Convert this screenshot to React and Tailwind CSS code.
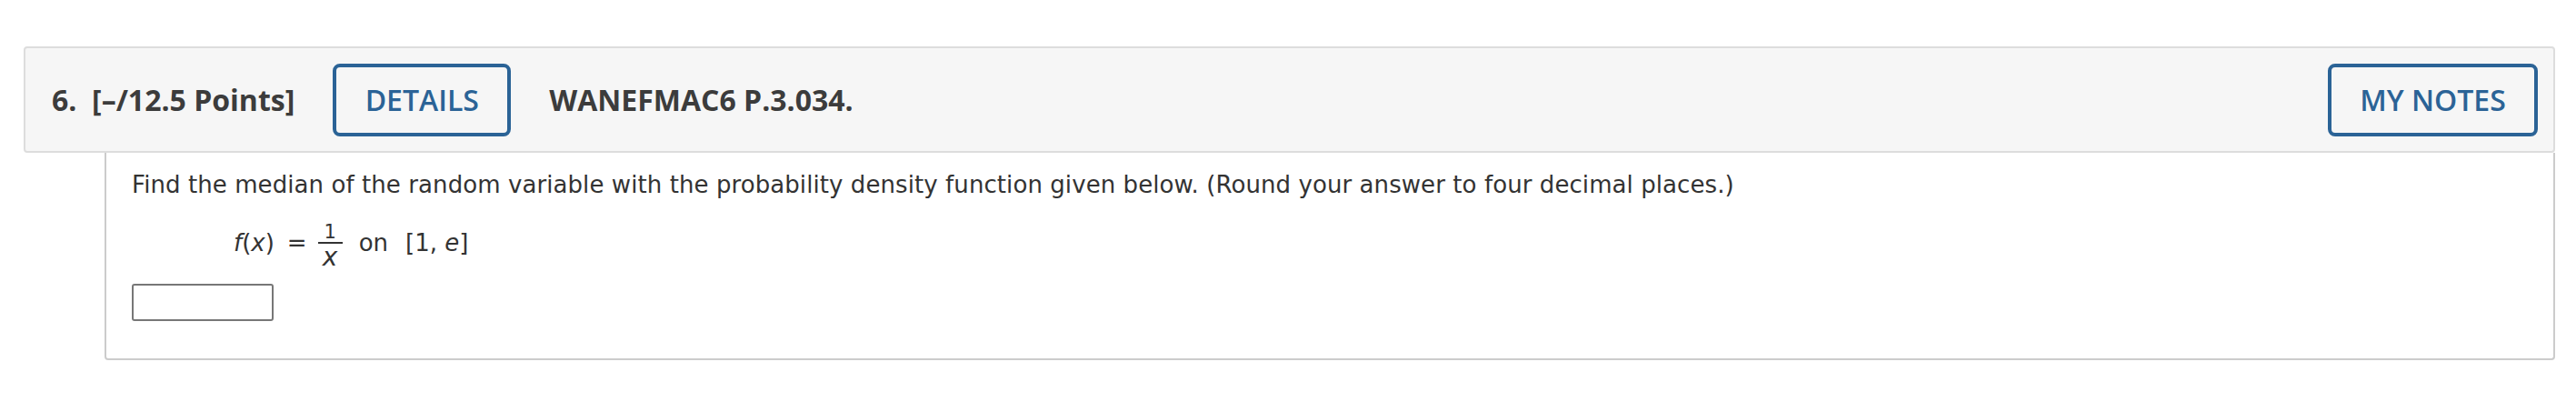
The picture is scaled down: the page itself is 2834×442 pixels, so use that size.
export default function App() {
  const head = { fontFamily: '"Open Sans", "Liberation Sans", sans-serif' }
  const body = { fontFamily: '"DejaVu Sans", Verdana, sans-serif' }

  return (
    <div className="min-h-screen bg-white pt-[51px] pl-[26px] pr-[23px]">
      {/* Question header */}
      <div
        style={head}
        className="flex h-[117px] items-center rounded-[4px] border-2 border-[#dddddd] bg-[#f6f6f6] pl-[29px] pr-[17px] text-[32px] text-[#3c3c3c]"
      >
        <span className="whitespace-pre font-bold">6.  [–/12.5 Points]</span>
        <button className="ml-[42px] flex h-[80px] w-[196px] items-center justify-center rounded-[8px] border-4 border-[#2b6396] text-[32px] font-semibold text-[#2b6396]">
          DETAILS
        </button>
        <span className="ml-[42px] font-bold">WANEFMAC6 P.3.034.</span>
        <button className="ml-auto flex h-[80px] w-[231px] items-center justify-center rounded-[8px] border-4 border-[#2b6396] text-[32px] font-semibold text-[#2b6396]">
          MY NOTES
        </button>
      </div>

      {/* Question body */}
      <div
        style={body}
        className="ml-[89px] h-[228px] rounded-b-[4px] border-2 border-t-0 border-[#cccccc] pt-[17px] pl-[28px] text-[26px] text-[#333333]"
      >
        <p className="leading-[36px] tracking-[0.08px]">
          Find the median of the random variable with the probability density function given below. (Round your answer to four decimal places.)
        </p>
        <div className="mt-[24px] ml-[112px] flex items-center">
          <span className="mb-[8px] leading-[30px]">
            <i>f</i>(<i>x</i>)
          </span>
          <span className="mb-[8px] ml-[14px] leading-[30px]">=</span>
          <span className="ml-[12px] flex flex-col items-center">
            <span className="text-[21px] leading-[20px]">1</span>
            <span className="mt-[1px] h-[2px] w-[27px] bg-[#333333]" />
            <i className="mt-[2px] text-[28px] leading-[26px]">x</i>
          </span>
          <span className="mb-[8px] ml-[18px] leading-[30px]">on</span>
          <span className="mb-[8px] ml-[19px] leading-[30px]">
            [1, <i>e</i>]
          </span>
        </div>
        <input
          type="text"
          className="mt-[16px] block h-[41px] w-[156px] rounded-[3px] border-2 border-[#777777] bg-white"
        />
      </div>
    </div>
  )
}
